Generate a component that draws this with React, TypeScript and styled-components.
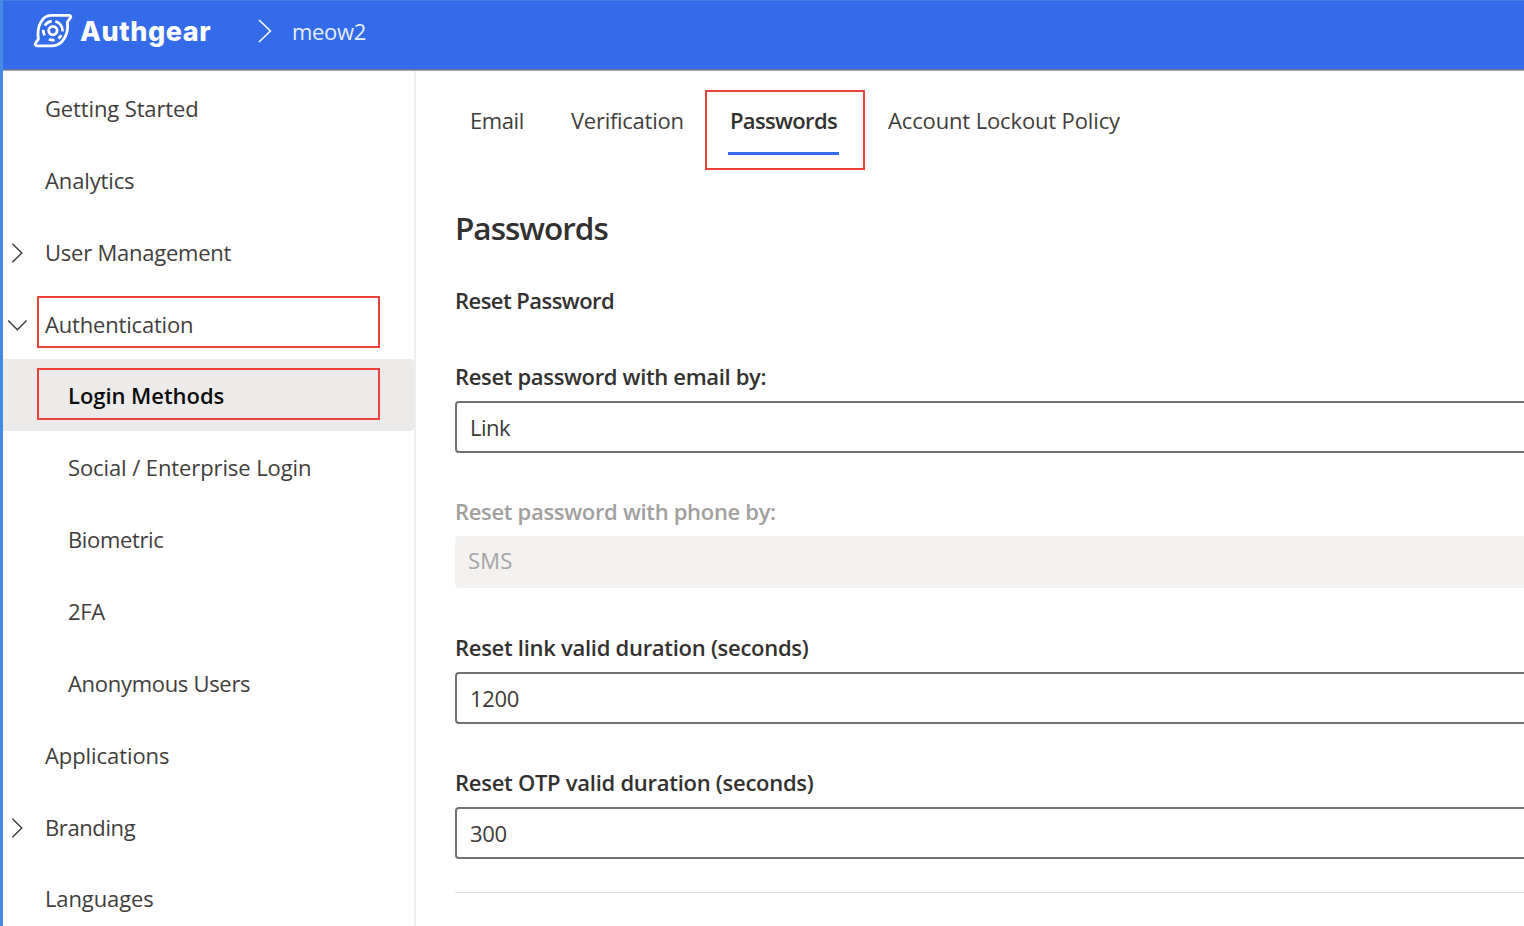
import React from "react";
import styled, { createGlobalStyle } from "styled-components";

const GlobalStyle = createGlobalStyle`
  *, *::before, *::after { box-sizing: border-box; }
  html, body { margin: 0; padding: 0; overflow: hidden; }
  body { font-family: "Open Sans", "Noto Sans", sans-serif; color: #3b3a39; background: #fff; }
`;

const Page = styled.div`
  width: 100vw;
  height: 100vh;
  display: flex;
  flex-direction: column;
  overflow: hidden;
  border-left: 3px solid #438be3;
  background: #fff;
`;

const TopBar = styled.header`
  flex: none;
  height: 71px;
  display: flex;
  align-items: center;
  padding: 0 0 9px 30px;
  background: #346bea;
  border-top: 1px solid #3d80e2;
  border-bottom: 1px solid #a6a6a8;
  box-shadow: inset 0 -1px 0 #6a7697;
  color: #fff;
`;

const Wordmark = styled.span`
  margin-left: 7px;
  width: 133px;
  padding-top: 1px;
  font-family: Inter, sans-serif;
  font-weight: 800;
  font-size: 27px;
  line-height: 34px;
  letter-spacing: 0.6px;
  white-space: nowrap;
`;

const Crumb = styled.span`
  margin-left: 20px;
  font-size: 22px;
  line-height: 30px;
  letter-spacing: -0.3px;
  color: #e6edfd;
  white-space: nowrap;
`;

const Icon = styled.svg`
  display: block;
  flex: none;
  fill: none;
  stroke: currentColor;
`;

const CrumbArrow = styled(Icon)`
  margin-left: 45px;
`;

const Body = styled.div`
  flex: 1;
  min-height: 0;
  display: flex;
`;

const Sidebar = styled.nav`
  flex: none;
  width: 413px;
  padding-top: 0.9px;
  border-right: 2px solid #eeeeee;
`;

const NavRow = styled.div<{ $active?: boolean }>`
  position: relative;
  height: 71.83px;
  display: flex;
  align-items: center;
  background: ${(p) => (p.$active ? "#ecebea" : "transparent")};
  border-radius: 0 4px 4px 0;
`;

const NavIcon = styled.span`
  width: 42px;
  flex: none;
  display: flex;
  align-items: center;
  padding: 3px 0 0 4px;
`;

const NavText = styled.span<{ $nested?: boolean; $active?: boolean; $ls?: number }>`
  margin-left: ${(p) => (p.$nested ? 23 : 0)}px;
  padding-top: ${(p) => (p.$active ? 0 : 1)}px;
  font-size: 22px;
  line-height: 30px;
  font-weight: ${(p) => (p.$active ? 600 : 400)};
  color: ${(p) => (p.$active ? "#0b0b0b" : "#3f3e3d")};
  letter-spacing: ${(p) => p.$ls ?? 0}px;
  white-space: nowrap;
`;

const NavHighlight = styled.span`
  position: absolute;
  left: 34px;
  top: 8.6px;
  width: 343px;
  height: 52px;
  border: 2px solid #e8423a;
`;

const Main = styled.main`
  flex: 1;
  min-width: 0;
  padding-left: 39px;
  overflow: hidden;
`;

const Tabs = styled.div`
  display: flex;
  height: 100px;
  padding: 19px 0 0 15px;
`;

const Tab = styled.div<{ $w: number; $active?: boolean; $ls?: number }>`
  position: relative;
  width: ${(p) => p.$w}px;
  padding-top: 15px;
  font-size: 22px;
  line-height: 30px;
  font-weight: ${(p) => (p.$active ? 600 : 400)};
  color: ${(p) => (p.$active ? "#323130" : "#3f3e3d")};
  letter-spacing: ${(p) => p.$ls ?? 0}px;
  white-space: nowrap;
`;

const TabUnderline = styled.span`
  position: absolute;
  left: -2px;
  top: 62px;
  width: 111px;
  height: 3px;
  background: #346bea;
`;

const TabHighlight = styled.span`
  position: absolute;
  left: -25px;
  top: 0;
  width: 160px;
  height: 80px;
  border: 2px solid #e8423a;
`;

const Title = styled.h1`
  margin: 34px 0 0;
  font-size: 31.5px;
  line-height: 46px;
  font-weight: 600;
  letter-spacing: -1px;
  color: #323130;
`;

const Subtitle = styled.h2`
  margin: 33px 0 43.5px;
  font-size: 22px;
  line-height: 32px;
  font-weight: 600;
  letter-spacing: -0.54px;
  color: #323130;
`;

const Field = styled.div`
  height: 135.5px;
`;

const Label = styled.label<{ $disabled?: boolean; $ls?: number }>`
  display: block;
  height: 41px;
  font-size: 22px;
  line-height: 32px;
  font-weight: 600;
  color: ${(p) => (p.$disabled ? "#a19f9d" : "#323130")};
  letter-spacing: ${(p) => p.$ls ?? 0}px;
  white-space: nowrap;
`;

const Control = styled.div<{ $disabled?: boolean; $ls?: number }>`
  height: 52px;
  margin-right: -6px;
  padding: ${(p) => (p.$disabled ? "0 0 4px 13px" : "0 0 0 13px")};
  display: flex;
  align-items: center;
  border: ${(p) => (p.$disabled ? "none" : "2px solid #737170")};
  border-radius: 4px;
  background: ${(p) => (p.$disabled ? "#f3f2f1" : "#fff")};
  color: ${(p) => (p.$disabled ? "#a6a4a2" : "#3b3a39")};
  font-size: 22px;
  letter-spacing: ${(p) => p.$ls ?? 0}px;
`;

const Divider = styled.hr`
  margin: -10px 0 0;
  border: 0;
  height: 1px;
  background: #e3e2e1;
`;

type NavItem = {
  label: string;
  nested?: boolean;
  active?: boolean;
  marked?: boolean;
  icon?: "right" | "down";
  ls?: number;
};

const navItems: NavItem[] = [
  { label: "Getting Started", ls: -0.13 },
  { label: "Analytics", ls: -0.13 },
  { label: "User Management", icon: "right", ls: -0.23 },
  { label: "Authentication", icon: "down", marked: true, ls: -0.18 },
  { label: "Login Methods", nested: true, active: true, marked: true, ls: -0.05 },
  { label: "Social / Enterprise Login", nested: true, ls: -0.1 },
  { label: "Biometric", nested: true, ls: -0.36 },
  { label: "2FA", nested: true, ls: -0.4 },
  { label: "Anonymous Users", nested: true, ls: -0.3 },
  { label: "Applications", ls: -0.08 },
  { label: "Branding", icon: "right", ls: -0.4 },
  { label: "Languages", ls: -0.12 },
];

const fields = [
  { label: "Reset password with email by:", value: "Link", ls: -0.34, valueLs: -0.5 },
  { label: "Reset password with phone by:", value: "SMS", disabled: true, ls: -0.32, valueLs: 0.2 },
  { label: "Reset link valid duration (seconds)", value: "1200", ls: -0.28, valueLs: -0.35 },
  { label: "Reset OTP valid duration (seconds)", value: "300", ls: -0.27, valueLs: -0.3 },
];

function Logo() {
  return (
    <Icon width="40" height="36" viewBox="0 0 40 36" strokeWidth="2.8" strokeLinejoin="round" strokeLinecap="round">
      <path d="M18 2.4H36C38 2.4 38.3 4 37.2 5.2L34.4 9C36 20.6 30 32.8 19 32.8H4C1.8 32.8 1.6 31 2.8 29.6L5.4 26.2C3.4 13.6 9 2.4 18 2.4Z" />
      <circle cx="19.9" cy="17.6" r="4.2" />
      <circle
        cx="19.9"
        cy="17.6"
        r="9.6"
        pathLength={360}
        strokeDasharray="5 23 27 25 35 35 35 28 50 22 75 0"
        strokeLinecap="butt"
      />
    </Icon>
  );
}

export default function App() {
  return (
    <Page>
      <GlobalStyle />
      <TopBar>
        <Logo />
        <Wordmark>Authgear</Wordmark>
        <CrumbArrow width="14" height="24" viewBox="0 0 14 24" strokeWidth="1.5">
          <path d="M1 1L12.4 12L1 23" />
        </CrumbArrow>
        <Crumb>meow2</Crumb>
      </TopBar>
      <Body>
        <Sidebar>
          {navItems.map((it) => (
            <NavRow key={it.label} $active={it.active}>
              <NavIcon>
                {it.icon === "right" && (
                  <Icon width="20" height="20" viewBox="0 0 20 20" strokeWidth="1.4">
                    <path d="M5.4 .8L14.8 10L5.4 19.2" />
                  </Icon>
                )}
                {it.icon === "down" && (
                  <Icon width="20" height="20" viewBox="0 0 20 20" strokeWidth="1.4">
                    <path d="M1.2 5.4L10.4 14.8L19.6 5.4" />
                  </Icon>
                )}
              </NavIcon>
              <NavText $nested={it.nested} $active={it.active} $ls={it.ls}>{it.label}</NavText>
              {it.marked && <NavHighlight />}
            </NavRow>
          ))}
        </Sidebar>
        <Main>
          <Tabs>
            <Tab $w={101} $ls={-0.4}>Email</Tab>
            <Tab $w={159} $ls={-0.27}>Verification</Tab>
            <Tab $w={158} $active $ls={-0.66}>
              Passwords
              <TabUnderline />
              <TabHighlight />
            </Tab>
            <Tab $w={240} $ls={-0.14}>Account Lockout Policy</Tab>
          </Tabs>
          <Title>Passwords</Title>
          <Subtitle>Reset Password</Subtitle>
          {fields.map((f) => (
            <Field key={f.label}>
              <Label $disabled={f.disabled} $ls={f.ls}>{f.label}</Label>
              <Control $disabled={f.disabled} $ls={f.valueLs}>{f.value}</Control>
            </Field>
          ))}
          <Divider />
        </Main>
      </Body>
    </Page>
  );
}
